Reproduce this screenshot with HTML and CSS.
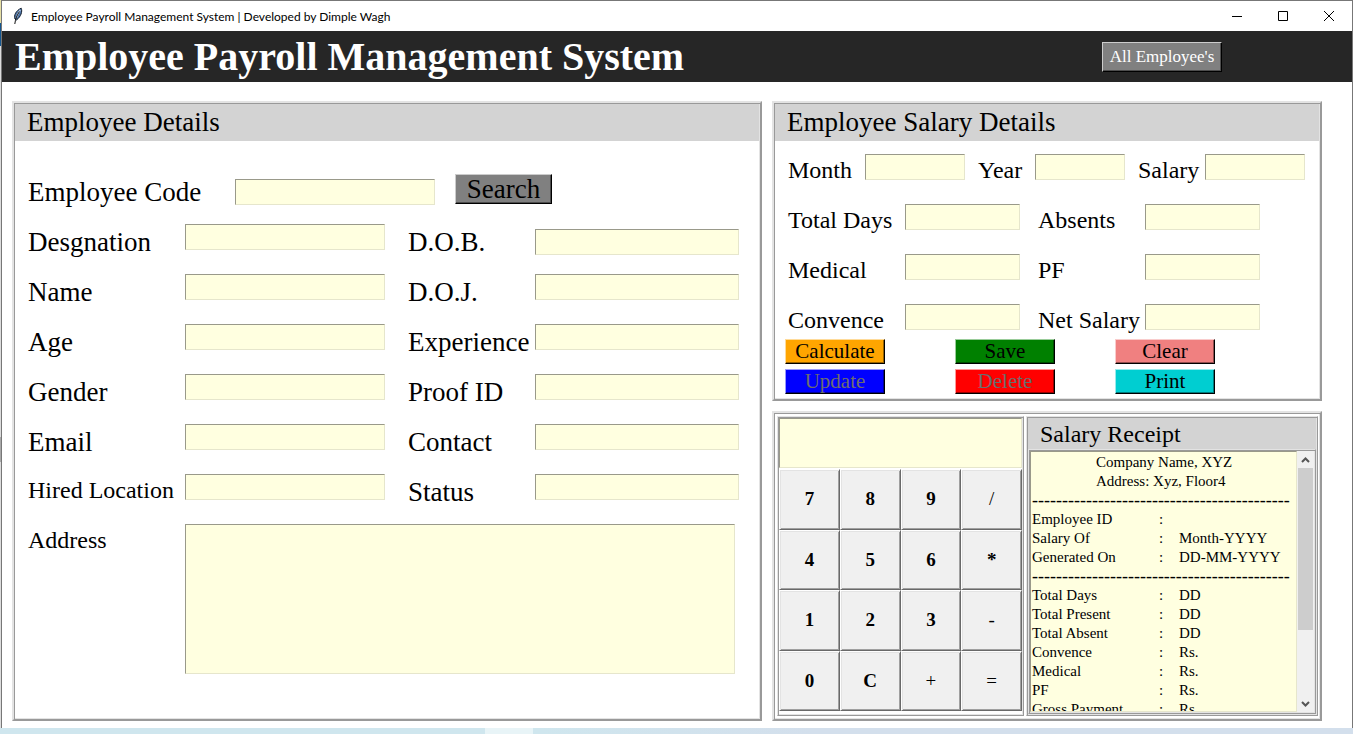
FILE: index.html
```html
<!DOCTYPE html>
<html lang="en">
<head>
<meta charset="utf-8">
<title>Employee Payroll Management System | Developed by Dimple Wagh</title>
<link rel="stylesheet" href="styles.css">
</head>
<body>
<div class="window">
  <div class="titlebar">
    <svg class="feather" width="12" height="18" viewBox="0 0 12 18" aria-hidden="true">
      <path d="M3 12C1.500 8.500 4 3.500 9.200 1.200C10.600 4.500 9 9.500 4.500 13Z" fill="#4d74a8" stroke="#15202e" stroke-width="1"/>
      <path d="M8.300 3C6.500 5.500 5 8.500 4.200 11" stroke="#c9dcf2" stroke-width="1.300" fill="none"/>
      <path d="M7.500 4.500C5 8 3.500 11.500 2.800 17" stroke="#101010" stroke-width="1" fill="none"/>
    </svg>
    <span class="titlebar-text">Employee Payroll Management System | Developed by Dimple Wagh</span>
    <div class="window-controls">
      <button type="button" class="window-button" aria-label="Minimize"><svg width="10" height="10" viewBox="0 0 10 10"><path d="M0 5.500H10" stroke="#000" fill="none"/></svg></button>
      <button type="button" class="window-button" aria-label="Maximize"><svg width="10" height="10" viewBox="0 0 10 10"><path d="M.5.5H9.500V9.500H.5Z" stroke="#000" fill="none"/></svg></button>
      <button type="button" class="window-button" aria-label="Close"><svg width="10" height="10" viewBox="0 0 10 10"><path d="M0 0L10 10M10 0L0 10" stroke="#000" fill="none"/></svg></button>
    </div>
  </div>

  <header class="banner">
    <h1 class="banner-title">Employee Payroll Management System</h1>
    <button type="button" class="button button-gray button-all">All Employee's</button>
  </header>

  <main class="workspace">
    <section class="panel">
      <h2 class="panel-title">Employee Details</h2>
      <form class="employee-form">
        <div class="code-row">
          <label class="label code-label" for="code">Employee Code</label>
          <input class="field code-field" id="code" type="text">
          <button type="button" class="button button-gray button-search">Search</button>
        </div>
        <div class="detail-grid">
          <label class="label" for="designation">Desgnation</label>
          <input class="field" id="designation" type="text">
          <label class="label label-second" for="dob">D.O.B.</label>
          <input class="field field-centered" id="dob" type="text">

          <label class="label" for="name">Name</label>
          <input class="field" id="name" type="text">
          <label class="label label-second" for="doj">D.O.J.</label>
          <input class="field" id="doj" type="text">

          <label class="label" for="age">Age</label>
          <input class="field" id="age" type="text">
          <label class="label label-second" for="experience">Experience</label>
          <input class="field" id="experience" type="text">

          <label class="label" for="gender">Gender</label>
          <input class="field" id="gender" type="text">
          <label class="label label-second" for="proof">Proof ID</label>
          <input class="field" id="proof" type="text">

          <label class="label" for="email">Email</label>
          <input class="field" id="email" type="text">
          <label class="label label-second" for="contact">Contact</label>
          <input class="field" id="contact" type="text">

          <label class="label label-small" for="location">Hired Location</label>
          <input class="field" id="location" type="text">
          <label class="label label-second" for="status">Status</label>
          <input class="field" id="status" type="text">

          <label class="label label-small" for="address">Address</label>
          <textarea class="field address" id="address"></textarea>
        </div>
      </form>
    </section>

    <div class="side">
      <section class="panel">
        <h2 class="panel-title">Employee Salary Details</h2>
        <form class="salary-form">
          <div class="period-grid">
            <label class="label label-small" for="month">Month</label>
            <input class="field" id="month" type="text">
            <label class="label label-small" for="year">Year</label>
            <input class="field" id="year" type="text">
            <label class="label label-small" for="salary">Salary</label>
            <input class="field" id="salary" type="text">
          </div>
          <div class="amount-grid">
            <label class="label label-small" for="days">Total Days</label>
            <input class="field" id="days" type="text">
            <label class="label label-small" for="absents">Absents</label>
            <input class="field" id="absents" type="text">

            <label class="label label-small" for="medical">Medical</label>
            <input class="field" id="medical" type="text">
            <label class="label label-small" for="pf">PF</label>
            <input class="field" id="pf" type="text">

            <label class="label label-small" for="convence">Convence</label>
            <input class="field" id="convence" type="text">
            <label class="label label-small" for="net">Net Salary</label>
            <input class="field" id="net" type="text">
          </div>
          <div class="actions">
            <button type="button" class="button action action-calculate">Calculate</button>
            <button type="button" class="button action action-save">Save</button>
            <button type="button" class="button action action-clear">Clear</button>
            <button type="button" class="button action action-update" disabled>Update</button>
            <button type="button" class="button action action-delete" disabled>Delete</button>
            <button type="button" class="button action action-print">Print</button>
          </div>
        </form>
      </section>

      <section class="panel tools">
        <div class="frame calculator">
          <input class="field display" type="text" aria-label="Calculator display">
          <div class="keypad">
            <button type="button" class="key">7</button>
            <button type="button" class="key">8</button>
            <button type="button" class="key">9</button>
            <button type="button" class="key key-sign">/</button>
            <button type="button" class="key">4</button>
            <button type="button" class="key">5</button>
            <button type="button" class="key">6</button>
            <button type="button" class="key">*</button>
            <button type="button" class="key">1</button>
            <button type="button" class="key">2</button>
            <button type="button" class="key">3</button>
            <button type="button" class="key key-sign">-</button>
            <button type="button" class="key">0</button>
            <button type="button" class="key">C</button>
            <button type="button" class="key key-sign">+</button>
            <button type="button" class="key key-sign">=</button>
          </div>
        </div>

        <div class="frame receipt">
          <h2 class="receipt-title">Salary Receipt</h2>
          <div class="frame receipt-body">
            <div class="receipt-text">
              <p class="company">Company Name, XYZ<br>Address: Xyz, Floor4</p>
              <p class="rule">-------------------------------------------</p>
              <table class="receipt-table">
                <tr><td class="item">Employee ID</td><td class="colon">:</td><td></td></tr>
                <tr><td class="item">Salary Of</td><td class="colon">:</td><td>Month-YYYY</td></tr>
                <tr><td class="item">Generated On</td><td class="colon">:</td><td>DD-MM-YYYY</td></tr>
              </table>
              <p class="rule">-------------------------------------------</p>
              <table class="receipt-table">
                <tr><td class="item">Total Days</td><td class="colon">:</td><td>DD</td></tr>
                <tr><td class="item">Total Present</td><td class="colon">:</td><td>DD</td></tr>
                <tr><td class="item">Total Absent</td><td class="colon">:</td><td>DD</td></tr>
                <tr><td class="item">Convence</td><td class="colon">:</td><td>Rs.</td></tr>
                <tr><td class="item">Medical</td><td class="colon">:</td><td>Rs.</td></tr>
                <tr><td class="item">PF</td><td class="colon">:</td><td>Rs.</td></tr>
                <tr><td class="item">Gross Payment</td><td class="colon">:</td><td>Rs.</td></tr>
              </table>
            </div>
            <div class="scrollbar">
              <button type="button" class="scroll-arrow" aria-label="Scroll up"><svg width="9" height="6" viewBox="0 0 9 6"><path d="M1 5L4.500 1.500L8 5" stroke="#555" stroke-width="2" fill="none"/></svg></button>
              <div class="scroll-thumb"></div>
              <div class="scroll-track"></div>
              <button type="button" class="scroll-arrow" aria-label="Scroll down"><svg width="9" height="6" viewBox="0 0 9 6"><path d="M1 1L4.500 4.500L8 1" stroke="#555" stroke-width="2" fill="none"/></svg></button>
            </div>
          </div>
        </div>
      </section>
    </div>
  </main>
</div>
<div class="taskbar"><div class="taskbar-item"></div></div>
</body>
</html>
```
FILE: styles.css
```css
:root {
  --light: #e3e3e3;
  --dark: #999999;
  --cream: #ffffe0;
}

* { box-sizing: border-box; }

body {
  margin: 0;
  min-height: 100vh;
  display: flex;
  flex-direction: column;
  font-family: "Liberation Serif", "Times New Roman", serif;
  color: #000;
  background: linear-gradient(#e6dfa4 0 23px, #14568f 23px 46px, #dcdcdc 46px 437px, #a9a9a9 437px 462px, #dcdcdc 462px);
}

h1, h2, p { margin: 0; font-weight: normal; }

input, textarea, button { font: inherit; color: inherit; border-radius: 0; margin: 0; }

.window {
  flex: 1;
  display: flex;
  flex-direction: column;
  margin-left: 1px;
  border: 1px solid #777;
  border-bottom: 0;
  background: #fff;
}

.titlebar {
  display: flex;
  align-items: center;
  height: 30px;
  padding-left: 10px;
  font-family: Lato, "Open Sans", sans-serif;
  font-size: 12px;
}

.titlebar-text { margin-left: 7px; white-space: nowrap; }

.window-controls { display: flex; margin-left: auto; }

.window-button {
  display: flex;
  align-items: center;
  justify-content: center;
  width: 46px;
  height: 30px;
  padding: 0;
  border: 0;
  background: none;
}

.banner {
  display: flex;
  align-items: center;
  justify-content: space-between;
  height: 51px;
  padding: 0 130px 0 13px;
  background: #262626;
  color: #fff;
}

.banner-title { font-size: 40px; font-weight: bold; line-height: 51px; white-space: nowrap; }

.button {
  padding: 0;
  border: 1px solid;
  border-color: rgba(255, 255, 255, 0.6) #000 #000 rgba(255, 255, 255, 0.6);
  box-shadow: inset -1px -1px 0 rgba(0, 0, 0, 0.4);
  text-align: center;
}

.button-gray { background-color: #808080; }

.button-all { width: 120px; height: 30px; font-size: 17px; line-height: 28px; }

.button-search { width: 97px; height: 30px; margin-left: 20px; font-size: 27px; line-height: 28px; }

.workspace {
  flex: 1;
  display: grid;
  grid-template-columns: minmax(0, 750fr) minmax(0, 550fr);
  gap: 10px;
  padding: 19px 30px 7px 10px;
}

.side { display: grid; grid-template-rows: 300px 1fr; gap: 10px; min-height: 0; }

.panel {
  padding: 1px;
  border: 2px solid;
  border-color: var(--light) var(--dark) var(--dark) var(--light);
  box-shadow: inset 1px 1px 0 var(--dark), inset -1px -1px 0 var(--light);
}

.panel-title {
  padding-left: 12px;
  font-size: 27px;
  line-height: 37px;
  background: #d3d3d3;
}

.label { font-size: 27px; line-height: 36px; white-space: nowrap; }

.label-small { font-size: 24px; line-height: 32px; }

.field {
  width: 100%;
  height: 26px;
  padding: 0 2px;
  border: 1px solid;
  border-color: #99998a #e6e6cc #e6e6cc #99998a;
  background: var(--cream);
  font-size: 20px;
  outline: 0;
}

.employee-form { padding: 33px 20px 0 13px; }

.code-row { display: flex; align-items: flex-start; height: 50px; }

.code-label { flex: 0 0 207px; }

.code-field { flex: 0 1 200px; margin-top: 5px; }

.detail-grid {
  display: grid;
  grid-template-columns: 157px minmax(0, 200fr) 150px minmax(0, 204fr);
  grid-template-rows: repeat(6, 50px) auto;
  align-items: start;
}

.label-second { padding-left: 23px; }

.field-centered { margin-top: 5px; }

.address { grid-column: 2 / 5; width: calc(100% - 4px); height: 150px; resize: none; }

.salary-form { padding: 13px 14px 0 10px; }

.period-grid, .amount-grid { display: grid; align-items: start; padding-left: 3px; }

.period-grid {
  grid-template-columns: 77px minmax(0, 100fr) 70px minmax(0, 90fr) 80px minmax(0, 100fr);
  grid-template-rows: 50px;
}

.period-grid .field + .label { padding-left: 13px; }

.amount-grid {
  grid-template-columns: 117px minmax(0, 1fr) 125px minmax(0, 1fr);
  grid-template-rows: 50px 50px 35px;
  margin-right: 45px;
}

.amount-grid .field + .label { padding-left: 18px; }

.period-grid .label, .amount-grid .label { line-height: 33px; }

.amount-grid .label:nth-child(4n + 1) { padding-left: 0; }

.actions {
  display: grid;
  grid-template-columns: 170px 160px 100px;
  gap: 5px 0;
}

.action { width: 100px; height: 25px; font-size: 21px; line-height: 23px; }
.action:disabled { color: #6d6d6d; }
.action-calculate { background-color: #ffa500; }
.action-save { background-color: #008000; }
.action-clear { background-color: #f08080; }
.action-update { background-color: #0000ff; }
.action-delete { background-color: #ff0000; }
.action-print { background-color: #00ced1; }

.tools {
  display: grid;
  grid-template-columns: 247fr 292fr;
  gap: 2px;
  padding: 3px 2px 3px 3px;
}

.frame {
  padding: 1px;
  border: 1px solid;
  border-color: var(--light) var(--dark) var(--dark) var(--light);
  box-shadow: inset 1px 1px 0 var(--dark), inset -1px -1px 0 var(--light);
}

.calculator { display: flex; flex-direction: column; }

.display { height: 50px; flex: none; }

.keypad {
  flex: 1;
  display: grid;
  grid-template-columns: repeat(4, 1fr);
  grid-auto-rows: 1fr;
  padding: 1px 0 3px;
}

.key {
  padding: 0;
  border: 1px solid;
  border-color: #fff #696969 #696969 #fff;
  box-shadow: inset 1px 1px 0 var(--light), inset -1px -1px 0 #a0a0a0;
  background: #f0f0f0;
  font-size: 19px;
  font-weight: bold;
}

.key-sign { font-weight: normal; }

.receipt { display: flex; flex-direction: column; min-height: 0; }

.receipt-title { padding: 1px 0 0 12px; font-size: 24px; line-height: 30px; background: #d3d3d3; }

.receipt-body { flex: 1 1 0; display: flex; min-height: 0; background: #fff; }

.receipt-text {
  flex: 1;
  min-width: 0;
  overflow: hidden;
  padding: 1px;
  border: 1px solid;
  border-color: #99998a #e6e6cc #e6e6cc #99998a;
  background: var(--cream);
  font-size: 15px;
  line-height: 19px;
  white-space: nowrap;
}

.company { padding-left: 64px; }

.rule { height: 19px; font-size: 18px; overflow: hidden; }

.receipt-table { border-collapse: collapse; }

.receipt-table td { height: 19px; padding: 0; }

.receipt-table .item { width: 127px; }

.receipt-table .colon { width: 20px; }

.scrollbar { flex: 0 0 17px; display: flex; flex-direction: column; background: #f0f0f0; }

.scroll-arrow {
  flex: 0 0 17px;
  display: flex;
  align-items: center;
  justify-content: center;
  padding: 0;
  border: 0;
  background: none;
}

.scroll-thumb { flex: 162; margin: 0 1px; background: #cdcdcd; }

.scroll-track { flex: 65; }

.taskbar {
  height: 6px;
  background: linear-gradient(90deg, #cfe6ee, #cfe6ee 40%, #d3dfec 60%, #d3dfec);
}

.taskbar-item { width: 48px; height: 6px; margin-left: 485px; background: #e8f4f7; }
```
